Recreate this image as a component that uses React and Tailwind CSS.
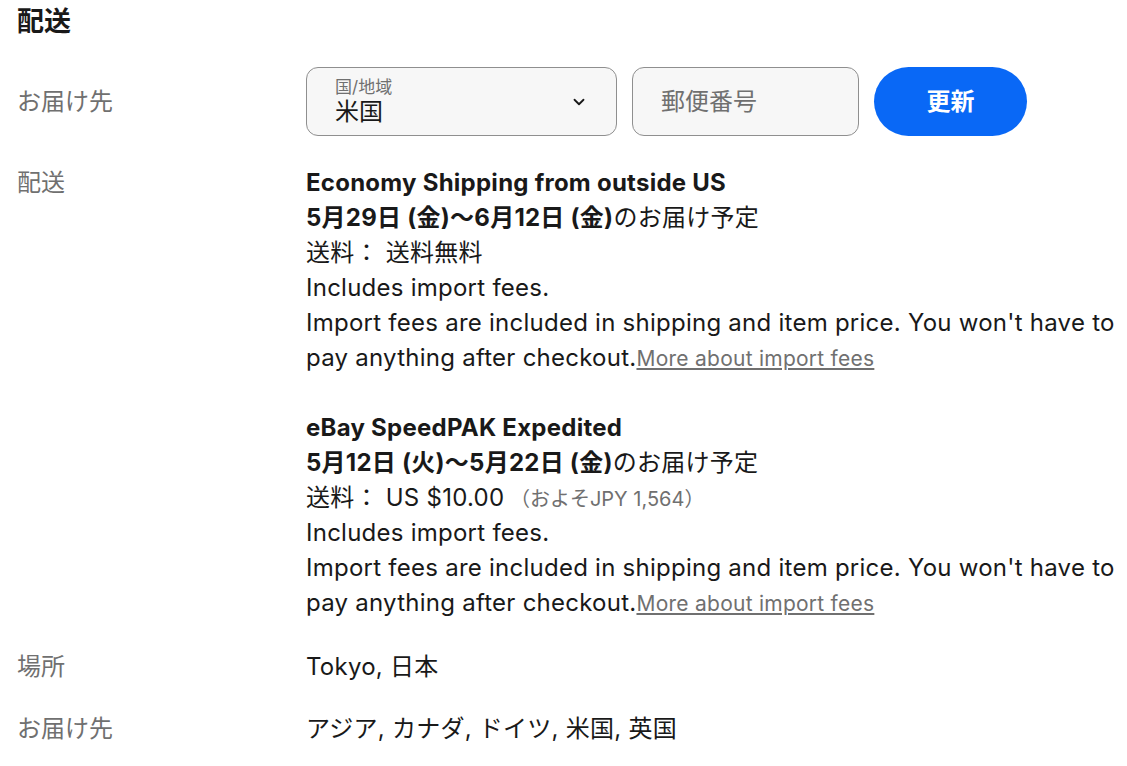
import React from "react";

const FONT = { fontFamily: '"Inter", "Noto Sans CJK JP", sans-serif' };

function Label({ children }) {
  return <div className="w-[289px] shrink-0 tracking-normal text-[#707070]">{children}</div>;
}

function ChevronDown() {
  return (
    <svg width="18" height="18" viewBox="0 0 24 24" fill="none" stroke="#191919" strokeWidth="2.4" strokeLinecap="round" strokeLinejoin="round">
      <path d="M6 9l6 6 6-6" />
    </svg>
  );
}

function ShippingOption({ name, dateBold, cost, note }) {
  return (
    <div>
      <div className="font-bold">{name}</div>
      <div>
        <span className="font-bold">{dateBold}</span>のお届け予定
      </div>
      <div className="h-[35px]">
        送料： {cost}
        {note && <span className="text-[20px] leading-none tracking-normal text-[#707070]">{note}</span>}
      </div>
      <div>Includes import fees.</div>
      <div className="whitespace-nowrap">
        Import fees are included in shipping and item price. You won't have to
        <br />
        pay anything after checkout.
        <a href="#" className="text-[21px] leading-none text-[#707070] underline">More about import fees</a>
      </div>
    </div>
  );
}

export default function App() {
  return (
    <div className="min-h-screen bg-white pl-[17px] pt-[4px] text-[24px] leading-[35px] tracking-[0.25px] text-[#191919]" style={FONT}>
      <h2 className="text-[27px] font-bold leading-[36px] tracking-normal">配送</h2>

      <div className="mt-[27px] flex items-center">
        <Label>お届け先</Label>
        <div className="flex items-center gap-[15px]">
          <div className="flex h-[69px] w-[311px] items-center justify-between rounded-[12px] border border-[#8f8f8f] bg-[#f7f7f7] pl-[28px] pr-[28px]">
            <div className="flex flex-col tracking-normal">
              <span className="text-[17px] leading-[20px] text-[#707070]">国/地域</span>
              <span className="text-[24px] leading-[29px]">米国</span>
            </div>
            <ChevronDown />
          </div>
          <div className="flex h-[69px] w-[227px] items-center rounded-[12px] border border-[#8f8f8f] bg-[#f7f7f7] pl-[28px] tracking-normal text-[#707070]">
            郵便番号
          </div>
          <button className="h-[69px] w-[153px] rounded-full bg-[#0968f6] text-[24px] font-bold tracking-normal text-white">
            更新
          </button>
        </div>
      </div>

      <div className="mt-[29px] flex">
        <Label>配送</Label>
        <div className="flex flex-col gap-[35px]">
          <ShippingOption
            name="Economy Shipping from outside US"
            dateBold="5月29日 (金)〜6月12日 (金)"
            cost="送料無料"
          />
          <ShippingOption
            name="eBay SpeedPAK Expedited"
            dateBold="5月12日 (火)〜5月22日 (金)"
            cost="US $10.00"
            note=" （およそJPY 1,564）"
          />
        </div>
      </div>

      <div className="mt-[29px] flex">
        <Label>場所</Label>
        <div>Tokyo, 日本</div>
      </div>

      <div className="mt-[27px] flex">
        <Label>お届け先</Label>
        <div>アジア, カナダ, ドイツ, 米国, 英国</div>
      </div>
    </div>
  );
}
